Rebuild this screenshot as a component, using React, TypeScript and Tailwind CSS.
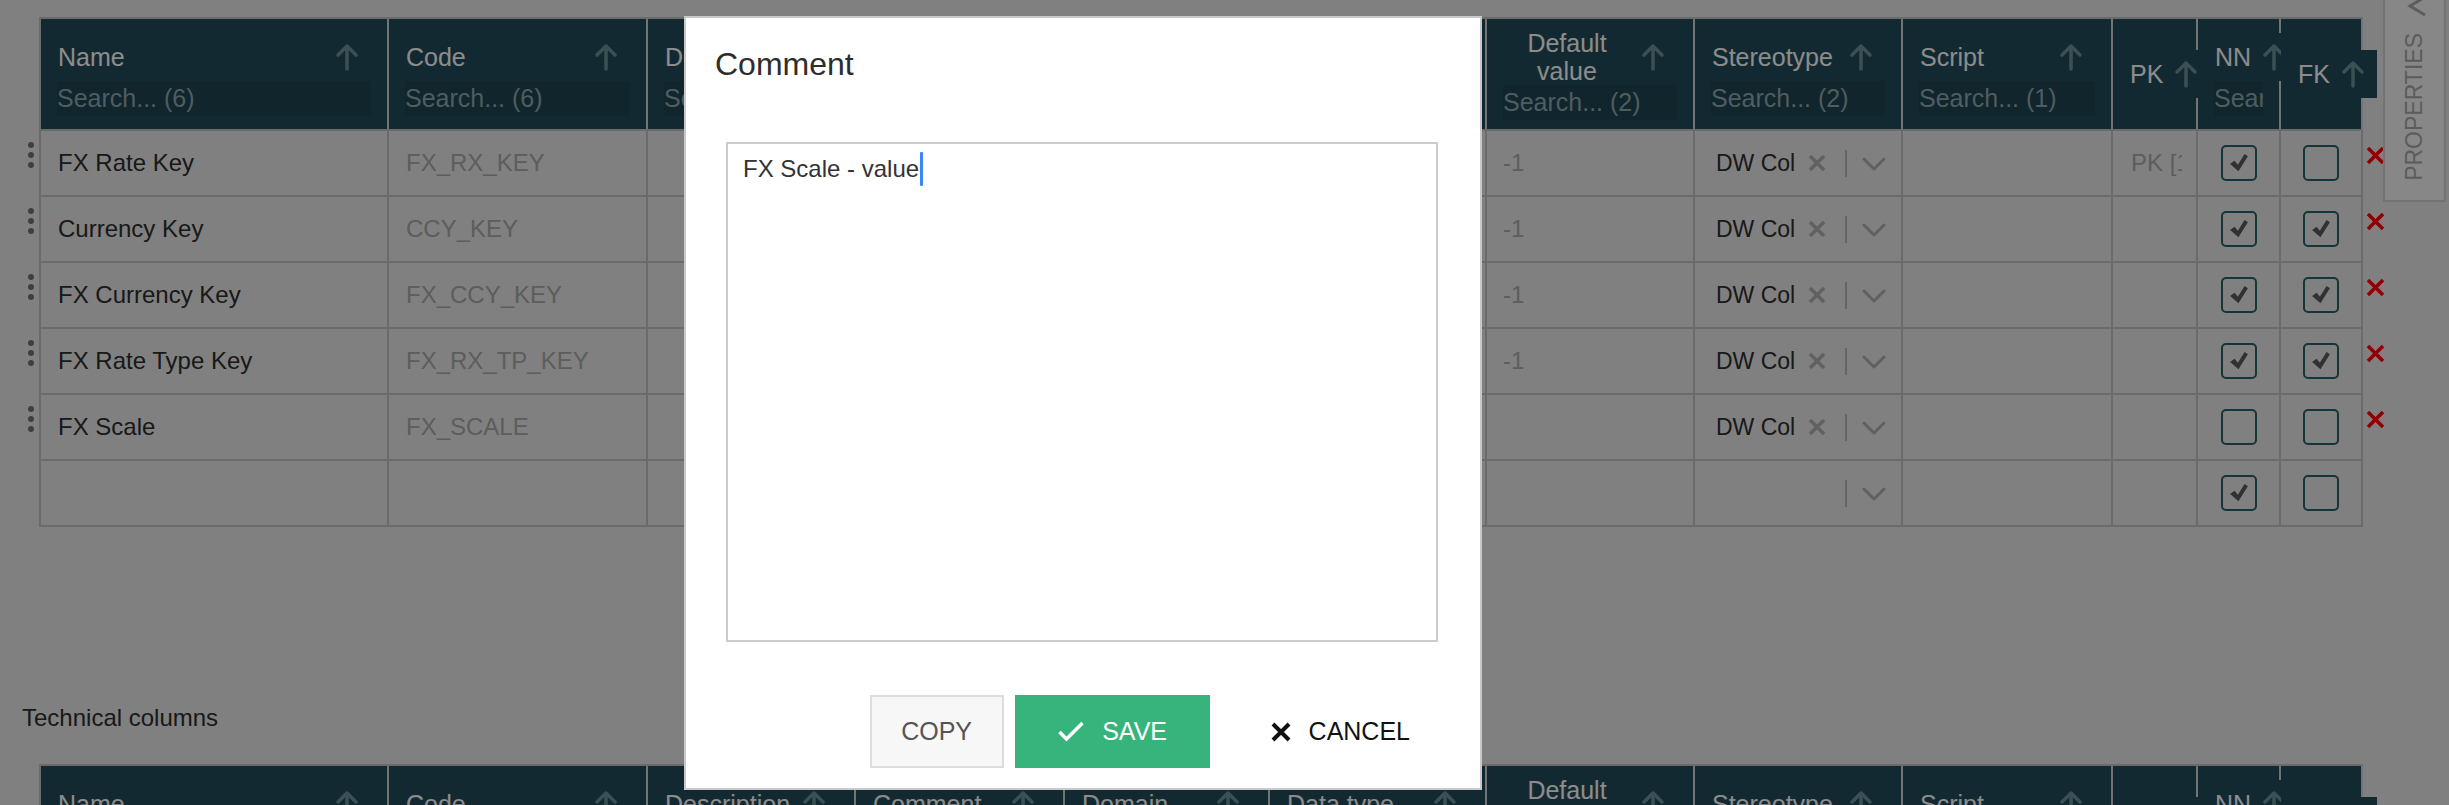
type Column = {
  key: string
  label: string
  w: string
  search?: string
  narrow?: boolean
  twoLine?: boolean
}

type Row = {
  name: string
  code: string
  def: string
  stereotype: string
  pk: string
  nn: boolean
  fk: boolean
  removable: boolean
}

const columns: Column[] = [
  { key: 'name', label: 'Name', w: 'w-[348px]', search: 'Search... (6)' },
  { key: 'code', label: 'Code', w: 'w-[259px]', search: 'Search... (6)' },
  { key: 'description', label: 'Description', w: 'w-[208px]', search: 'Search...' },
  { key: 'comment', label: 'Comment', w: 'w-[209px]', search: 'Search...' },
  { key: 'domain', label: 'Domain', w: 'w-[205px]', search: 'Search...' },
  { key: 'dataType', label: 'Data type', w: 'w-[217px]', search: 'Search...' },
  { key: 'default', label: 'Default value', w: 'w-[208px]', search: 'Search... (2)', twoLine: true },
  { key: 'stereotype', label: 'Stereotype', w: 'w-[208px]', search: 'Search... (2)' },
  { key: 'script', label: 'Script', w: 'w-[210px]', search: 'Search... (1)' },
  { key: 'pk', label: 'PK', w: 'w-[85px]', narrow: true },
  { key: 'nn', label: 'NN', w: 'w-[83px]', search: 'Search...', narrow: true },
  { key: 'fk', label: 'FK', w: 'w-[82px]', narrow: true },
]

const rows: Row[] = [
  { name: 'FX Rate Key', code: 'FX_RX_KEY', def: '-1', stereotype: 'DW Column', pk: 'PK [1]', nn: true, fk: false, removable: true },
  { name: 'Currency Key', code: 'CCY_KEY', def: '-1', stereotype: 'DW Column', pk: '', nn: true, fk: true, removable: true },
  { name: 'FX Currency Key', code: 'FX_CCY_KEY', def: '-1', stereotype: 'DW Column', pk: '', nn: true, fk: true, removable: true },
  { name: 'FX Rate Type Key', code: 'FX_RX_TP_KEY', def: '-1', stereotype: 'DW Column', pk: '', nn: true, fk: true, removable: true },
  { name: 'FX Scale', code: 'FX_SCALE', def: '', stereotype: 'DW Column', pk: '', nn: false, fk: false, removable: true },
  { name: '', code: '', def: '', stereotype: '', pk: '', nn: true, fk: false, removable: false },
]

const technicalRows: Row[] = [
  { name: 'Load Date', code: 'LOAD_DT', def: '', stereotype: 'DW Column', pk: '', nn: true, fk: false, removable: true },
  { name: 'Source System', code: 'SRC_SYS', def: '', stereotype: 'DW Column', pk: '', nn: true, fk: false, removable: true },
]

function SortArrow() {
  return (
    <svg width="24" height="28" viewBox="0 0 24 28" fill="none" stroke="#6b929c" strokeWidth="3.5" strokeLinecap="round" strokeLinejoin="round" className="shrink-0">
      <path d="M12 26V3M3 12l9-9 9 9" />
    </svg>
  )
}

function Checkbox({ checked }: { checked: boolean }) {
  return (
    <span className="flex size-[36px] items-center justify-center rounded-[5px] border-2 border-[#2b5f6b]">
      {checked && (
        <svg width="20" height="20" viewBox="0 0 18 18">
          <path d="M1 10 5 7 8 10.5 14 1 17 3 8.5 16.5Z" fill="#5a5a5a" />
        </svg>
      )}
    </span>
  )
}

function HeadCell({ col }: { col: Column }) {
  const noSearch = !col.search
  return (
    <div
      className={`${col.w} flex shrink-0 flex-col border-r-2 border-[#d4d4d4] ${
        noSearch ? 'justify-center' : col.twoLine ? 'pt-[10px]' : 'pt-[14px]'
      }`}
    >
      <div
        className={`relative flex items-center gap-[11px] bg-[#234c59] pl-[17px] ${
          col.narrow ? 'w-max min-w-full pr-[12px]' : 'w-full pr-[28px]'
        } ${col.twoLine ? 'h-[56px]' : 'h-[48px]'}`}
      >
        <span
          className={`flex-1 whitespace-normal text-[25px] text-white ${
            col.twoLine ? 'text-center leading-[28px]' : 'leading-[30px]'
          }`}
        >
          {col.label}
        </span>
        <SortArrow />
      </div>
      {col.search && (
        <div className="px-[16px]">
          <input
            placeholder={col.search}
            className="block h-[35px] w-full bg-[#1e4450] text-[25px] text-white outline-none placeholder:text-[#8fa9b0]"
          />
        </div>
      )}
    </div>
  )
}

function RowDots() {
  return (
    <div className="flex w-[17px] shrink-0 flex-col items-center gap-[4px] pt-[11px]">
      <span className="size-[6px] rounded-full bg-[#737373]" />
      <span className="size-[6px] rounded-full bg-[#737373]" />
      <span className="size-[6px] rounded-full bg-[#737373]" />
    </div>
  )
}

function StereotypeSelect({ value }: { value: string }) {
  return (
    <div className="flex h-full items-center pl-[21px]">
      <span className="w-[79px] overflow-hidden whitespace-nowrap text-[23px] text-[#2e2e2e]">{value}</span>
      <svg width="18" height="18" viewBox="0 0 18 18" className={`ml-[13px] shrink-0 ${value ? '' : 'invisible'}`} stroke="#b0b0b0" strokeWidth="3.5">
        <path d="M2 2l14 14M16 2 2 16" />
      </svg>
      <span className="ml-[19px] h-[27px] w-[2px] shrink-0 bg-[#b8b8b8]" />
      <svg width="24" height="15" viewBox="0 0 24 15" fill="none" className="ml-[15px] shrink-0" stroke="#b0b0b0" strokeWidth="3" strokeLinecap="round" strokeLinejoin="round">
        <path d="M2 3l10 10 10-10" />
      </svg>
    </div>
  )
}

function BodyCell({ col, row }: { col: Column; row: Row }) {
  const base = `${col.w} flex h-full shrink-0 items-center border-r-2 border-[#c4c4c4]`
  switch (col.key) {
    case 'name':
      return <div className={`${base} pl-[17px] text-[24px] text-[#2e2e2e]`}>{row.name}</div>
    case 'code':
      return <div className={`${base} pl-[17px] text-[24px] text-[#a9a9a9]`}>{row.code}</div>
    case 'default':
      return <div className={`${base} pl-[16px] text-[24px] text-[#a9a9a9]`}>{row.def}</div>
    case 'stereotype':
      return (
        <div className={base}>
          <StereotypeSelect value={row.stereotype} />
        </div>
      )
    case 'pk':
      return (
        <div className={`${base} pl-[18px] pr-[14px]`}>
          <span className="block w-full overflow-hidden whitespace-nowrap text-[24px] text-[#a9a9a9]">{row.pk}</span>
        </div>
      )
    case 'nn':
      return (
        <div className={`${base} justify-center`}>
          <Checkbox checked={row.nn} />
        </div>
      )
    case 'fk':
      return (
        <div className={`${base} justify-center`}>
          <Checkbox checked={row.fk} />
        </div>
      )
    default:
      return <div className={base} />
  }
}

function ColumnsTable({ data }: { data: Row[] }) {
  return (
    <div>
      <div className="flex">
        <div className="w-[17px] shrink-0" />
        <div className="flex h-[114px] border-b-2 border-l-2 border-t-2 border-[#c4c4c4] bg-[#234c59]">
          {columns.map((col) => (
            <HeadCell key={col.key} col={col} />
          ))}
        </div>
      </div>
      {data.map((row, i) => (
        <div key={i} className="flex h-[66px]">
          {row.removable ? <RowDots /> : <div className="w-[17px] shrink-0" />}
          <div className="flex h-[66px] border-b-2 border-l-2 border-[#c4c4c4]">
            {columns.map((col) => (
              <BodyCell key={col.key} col={col} row={row} />
            ))}
          </div>
          {row.removable && (
            <button className="ml-[3px] self-start pt-[15px]">
              <svg width="19" height="19" viewBox="0 0 19 19" stroke="#ff0000" strokeWidth="3.5">
                <path d="M2 2l15 15M17 2 2 17" />
              </svg>
            </button>
          )}
        </div>
      ))}
    </div>
  )
}

function PropertiesTab() {
  return (
    <aside className="absolute right-[3px] top-0 flex h-[202px] w-[63px] flex-col items-center overflow-hidden border-2 border-t-0 border-[#d2d2d2] bg-[#f6f6f6]">
      <svg width="20" height="26" viewBox="0 0 20 26" fill="none" className="-mt-[6px] ml-[5px] shrink-0" stroke="#a8a8a8" strokeWidth="3">
        <path d="M18 3 3 12l15 9" />
      </svg>
      <span className="mt-[13px] rotate-180 text-[23px] leading-none text-[#a8a8a8] [writing-mode:vertical-rl]">PROPERTIES</span>
    </aside>
  )
}

function CommentDialog() {
  return (
    <div role="dialog" className="absolute left-[684px] top-[16px] flex h-[774px] w-[798px] flex-col border-2 border-[#c9c9c9] bg-white">
      <h2 className="pl-[29px] pt-[26px] text-[32px] leading-[40px] text-[#2d2d2d]">Comment</h2>
      <div className="ml-[40px] mt-[58px] h-[500px] w-[712px] border-2 border-[#cccccc] pl-[15px] pt-[10px]">
        <div className="flex h-[30px] items-center text-[24px] text-[#333333]">
          <span>FX Scale - value</span>
          <span className="ml-[1px] h-[34px] w-[3px] rounded-[1px] bg-[#3b87f7]" />
        </div>
      </div>
      <div className="mt-[53px] flex justify-end gap-[11px] pr-[30px]">
        <button className="h-[73px] w-[134px] border-2 border-[#dddddd] bg-[#f7f7f7] text-[25px] text-[#555555]">COPY</button>
        <button className="flex h-[73px] w-[195px] items-center justify-center gap-[17px] bg-[#37b47c] text-[25px] text-white">
          <svg width="28" height="21" viewBox="0 0 28 21" fill="none" stroke="#ffffff" strokeWidth="3.5">
            <path d="M2.5 11 9.5 18 25.5 2" />
          </svg>
          SAVE
        </button>
        <button className="flex h-[73px] items-center gap-[17px] pl-[49px] pr-[40px] text-[25px] text-[#111111]">
          <svg width="22" height="22" viewBox="0 0 22 22" stroke="#111111" strokeWidth="4">
            <path d="M3 3l16 16M19 3 3 19" />
          </svg>
          CANCEL
        </button>
      </div>
    </div>
  )
}

export default function App() {
  return (
    <div className="relative h-[805px] w-[2449px] overflow-hidden bg-[#e9e9e9] font-[Liberation_Sans,Arial,sans-serif]">
      <main className="pl-[22px] pt-[17px]">
        <ColumnsTable data={rows} />
        <p className="mt-[176px] text-[24px] leading-[30px] text-[#2e2e2e]">Technical columns</p>
        <div className="mt-[31px]">
          <ColumnsTable data={technicalRows} />
        </div>
      </main>
      <PropertiesTab />
      <div className="absolute inset-0 bg-black/45" />
      <CommentDialog />
    </div>
  )
}
